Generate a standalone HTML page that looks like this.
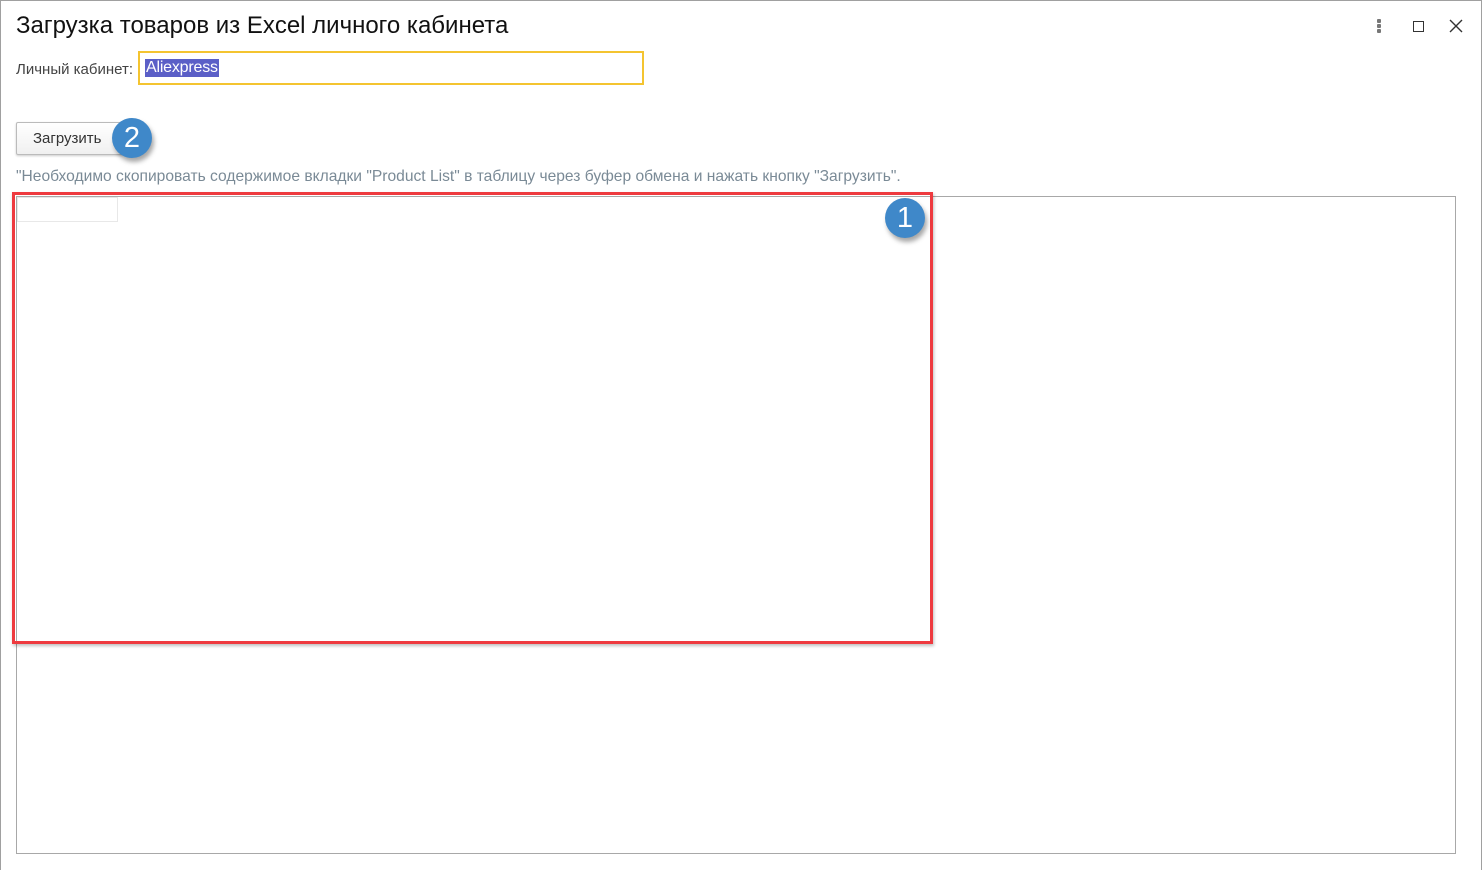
<!DOCTYPE html>
<html><head><meta charset="utf-8"><style>
*{box-sizing:border-box;margin:0;padding:0}
body{width:1482px;height:870px;background:#fff;font-family:"Liberation Sans",sans-serif;position:relative;overflow:hidden}
.frame{position:absolute;left:0;top:0;width:1482px;height:870px;border:1px solid #a0a0a0;border-bottom:none}
.abs{position:absolute}
.badge{position:absolute;width:40px;height:40px;border-radius:50%;background:#3f88c9;color:#fff;font-size:29px;text-align:center;line-height:40px;box-shadow:2px 4px 5px rgba(0,0,0,.35)}
</style></head><body>
<div class="frame"></div>
<div class="abs" style="left:16px;top:12px;font-size:24px;color:#111">Загрузка товаров из Excel личного кабинета</div>
<div class="abs" style="left:1377px;top:19px;width:4px;height:14px">
<div style="width:4px;height:4px;background:#777;border-radius:1px;margin-bottom:1px"></div><div style="width:4px;height:4px;background:#777;border-radius:1px;margin-bottom:1px"></div><div style="width:4px;height:4px;background:#777;border-radius:1px"></div></div>
<div class="abs" style="left:1413px;top:21px;width:11px;height:11px;border:1.5px solid #333"></div>
<svg class="abs" style="left:1449px;top:19px" width="14" height="14"><path d="M1 1L13 13M13 1L1 13" stroke="#333" stroke-width="1.4"/></svg>
<div class="abs" style="left:16px;top:61px;font-size:15px;color:#444">Личный кабинет:</div>
<div class="abs" style="left:138px;top:51px;width:506px;height:34px;border:2px solid #f4c430"></div>
<div class="abs" style="left:145px;top:59px;height:18px;background:#5b5fc7;color:#fff;font-size:16px;line-height:18px;padding:0 1px;letter-spacing:-0.2px">Aliexpress</div>
<div class="abs" style="left:16px;top:122px;width:108px;height:33px;border:1px solid #bbb;border-radius:2px;background:linear-gradient(#fff,#f0f0f0);box-shadow:0 1px 2px rgba(0,0,0,.2);font-size:15px;color:#333;line-height:31px;padding-left:16px">Загрузить</div>
<div class="badge" style="left:112px;top:118px">2</div>
<div class="abs" style="left:16px;top:168px;font-size:15.6px;color:#7a8a96">"Необходимо скопировать содержимое вкладки "Product List" в таблицу через буфер обмена и нажать кнопку "Загрузить".</div>
<div class="abs" style="left:16px;top:196px;width:1440px;height:658px;border:1px solid #a8a8a8"></div>
<div class="abs" style="left:17px;top:197px;width:101px;height:25px;border:1px solid #e8e8e8"></div>
<div class="abs" style="left:12px;top:192px;width:921px;height:452px;border:3px solid #ee3a3f;box-shadow:1px 2px 3px rgba(0,0,0,.25)"></div>
<div class="badge" style="left:885px;top:198px">1</div>
</body></html>
